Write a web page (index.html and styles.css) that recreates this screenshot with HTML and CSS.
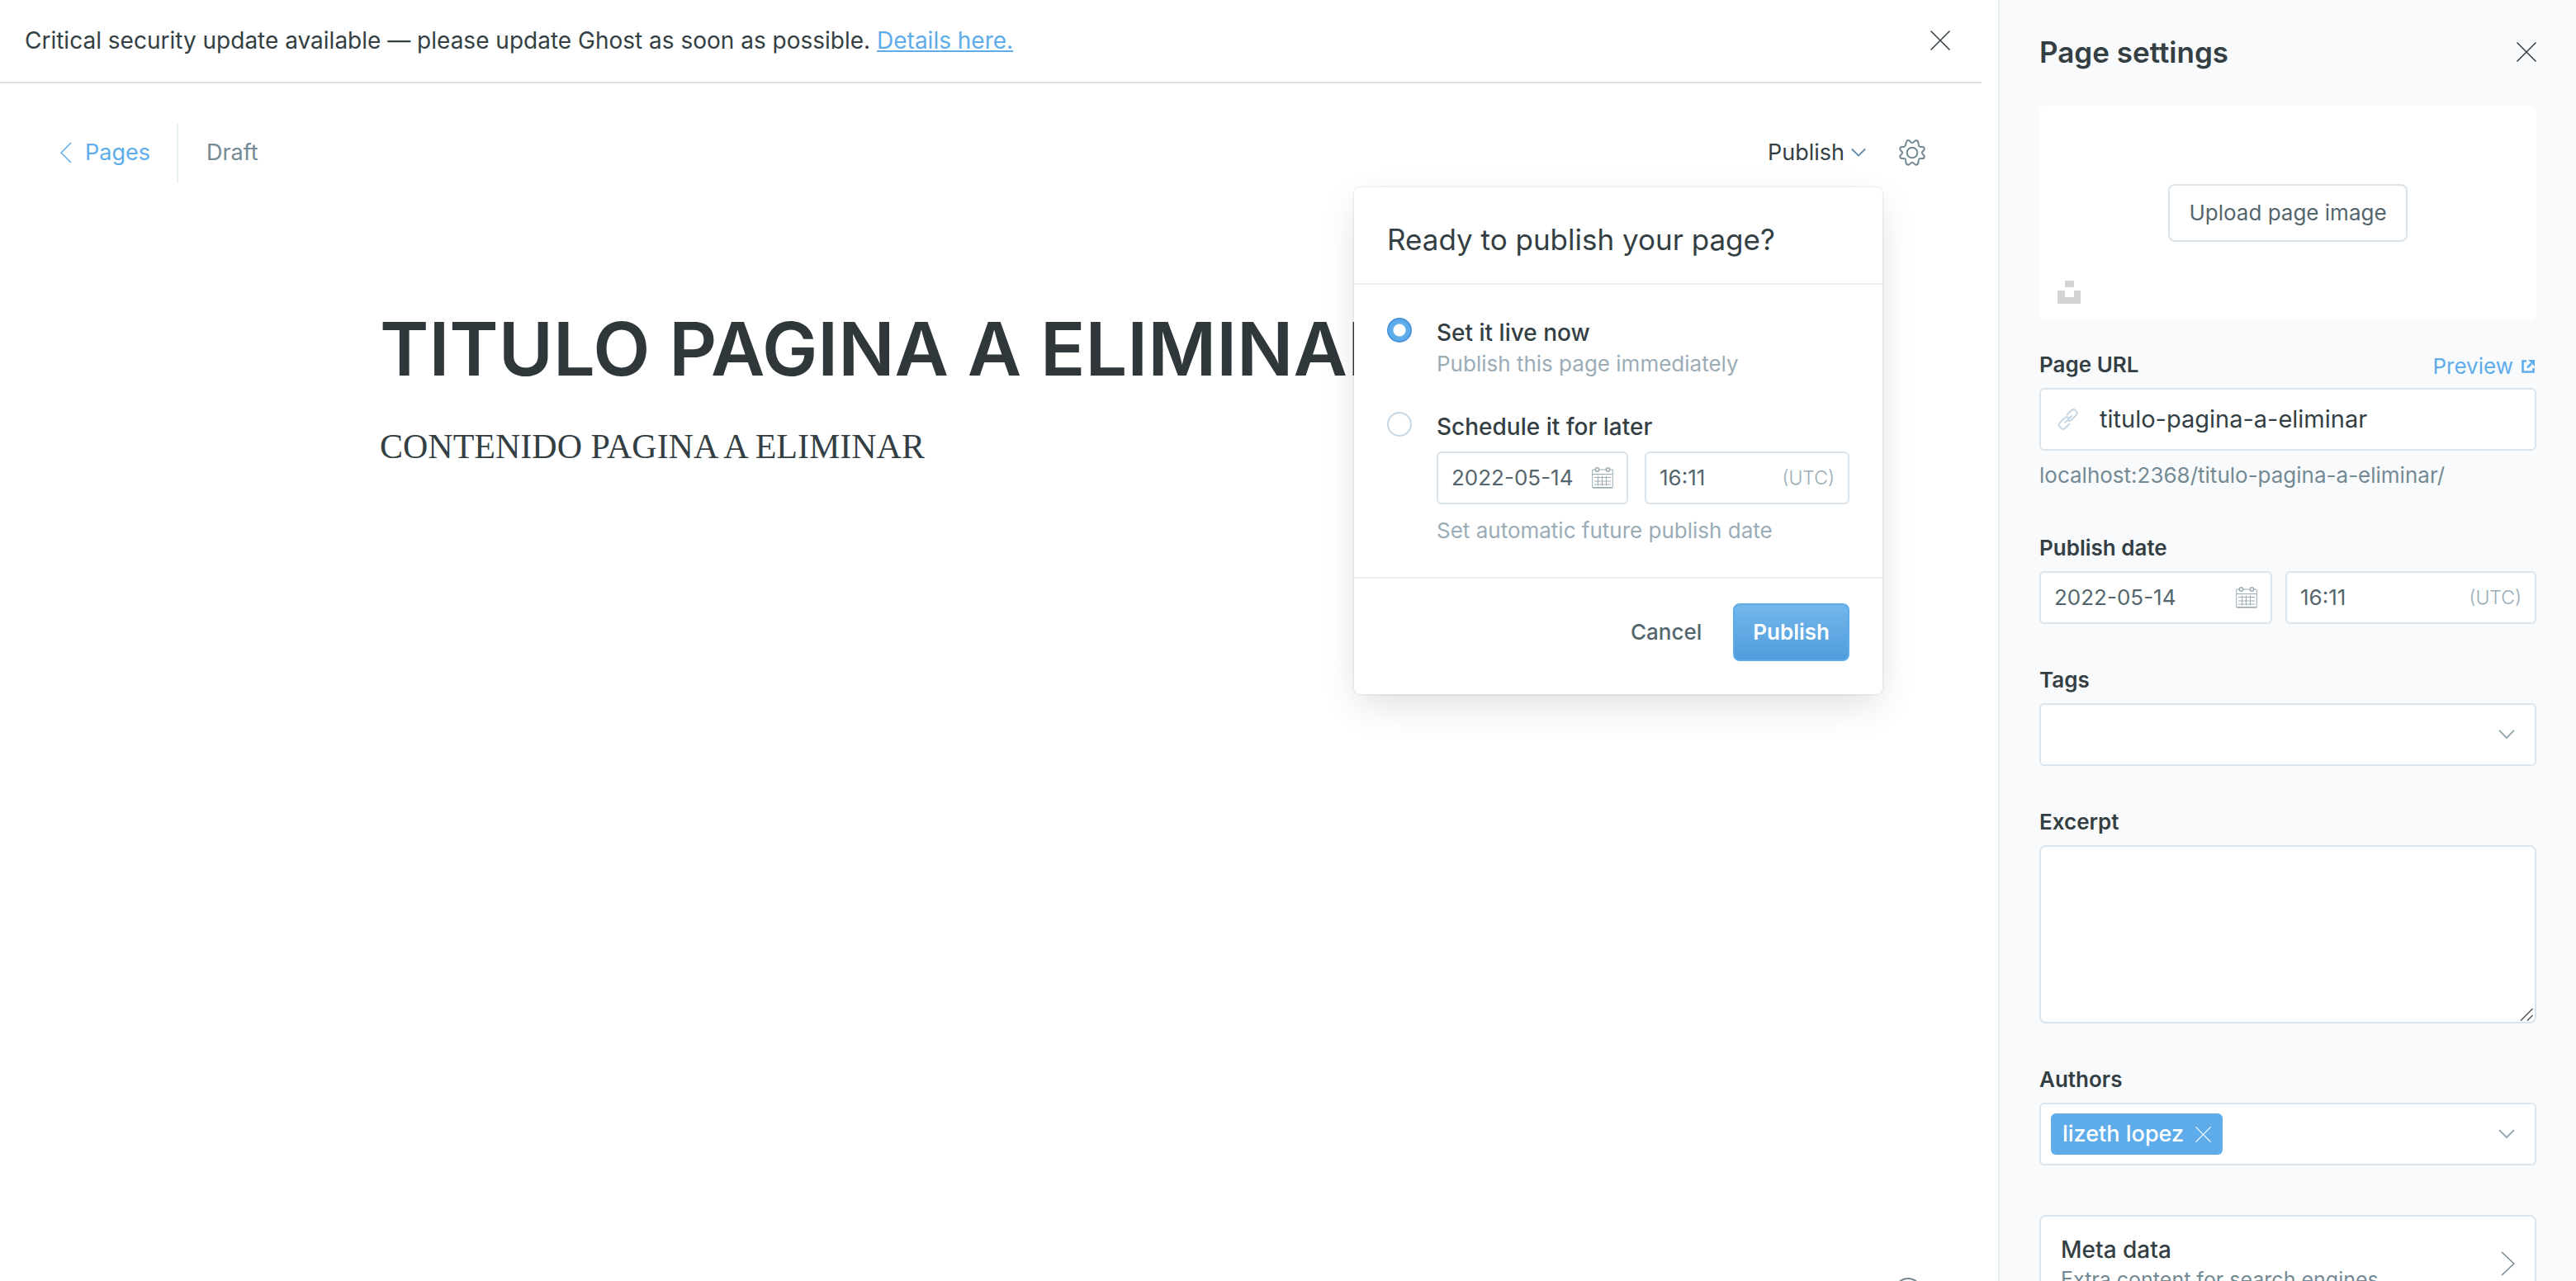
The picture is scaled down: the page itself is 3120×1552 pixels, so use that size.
FILE: index.html
```html
<!DOCTYPE html>
<html lang="en">
<head>
<meta charset="utf-8">
<title>Ghost Admin – Page editor</title>
<link rel="stylesheet" href="styles.css">
</head>
<body>
<svg class="sprite" aria-hidden="true">
  <symbol id="icon-close" viewBox="0 0 24 24"><path d="M.5.500l23 23M23.500.500l-23 23"/></symbol>
  <symbol id="icon-down" viewBox="0 0 20 12"><path d="M1 1l9 9 9-9"/></symbol>
  <symbol id="icon-calendar" viewBox="0 0 26 26"><path d="M1 3h3M9 3h8M22 3h3M.7 3v21.500h24.600V3M.7 8.500h24.600M3 12.500h20M3 17h20M3 21h20M7.500 10.500v12M12.500 10.500v12M17.500 10.500v12M1 25.200h24"/><circle cx="6.500" cy="3" r="2.200" stroke-width="1.500"/><circle cx="19.500" cy="3" r="2.200" stroke-width="1.500"/></symbol>
</svg>
<div class="app">
  <main class="editor">
    <div class="alert" role="alert">
      <p class="alert-text">Critical security update available — please update Ghost as soon as possible. <a href="#details">Details here.</a></p>
      <button class="icon-button" type="button" aria-label="Dismiss"><svg class="icon icon-close"><use href="#icon-close"/></svg></button>
    </div>
    <header class="toolbar">
      <a class="back-link" href="#pages"><svg class="icon back-arrow" viewBox="0 0 14 26"><path d="M13 1L1 13l12 12"/></svg>Pages</a>
      <span class="status">Draft</span>
      <div class="toolbar-actions">
        <div class="publish-menu">
          <button class="publish-trigger" type="button" aria-expanded="true">Publish<svg class="icon icon-down"><use href="#icon-down"/></svg></button>
          <form class="popover">
            <h2 class="popover-title">Ready to publish your page?</h2>
            <div class="popover-body">
              <input class="radio" type="radio" name="when" id="now" checked>
              <div class="option">
                <label class="option-label" for="now">Set it live now</label>
                <p class="option-hint">Publish this page immediately</p>
              </div>
              <input class="radio" type="radio" name="when" id="later">
              <div class="option">
                <label class="option-label" for="later">Schedule it for later</label>
                <div class="date-time popover-date">
                  <div class="field"><input type="text" aria-label="Scheduled date" value="2022-05-14"><svg class="icon calendar"><use href="#icon-calendar"/></svg></div>
                  <div class="field"><input type="text" aria-label="Scheduled time" value="16:11"><span class="zone">(UTC)</span></div>
                </div>
                <p class="option-hint">Set automatic future publish date</p>
              </div>
            </div>
            <div class="popover-footer">
              <button class="cancel" type="button">Cancel</button>
              <button class="primary" type="submit">Publish</button>
            </div>
          </form>
        </div>
        <button class="icon-button" type="button" aria-label="Settings"><svg class="icon gear" viewBox="0 0 32 32"><path d="M12.300 1.200a1.500 1.500 0 0 0-2.200.2L8.600 3.800c-.3 2.100-.4 3.500-1.300 4.400s-2.300 1-3.900.7c-1.600-.2-2.200 1.800-2.200 2.800 0 1.600 3 2.500 3 4.300s-3 2.800-3 4.400c.2 1.300.9 2.700 2.200 2.700 1.600 0 3-.6 4 .4s.9 2.600 1 4.400c.1 1.500 1.600 2.500 3.200 2.900 1.500 0 2.500-3 4.400-3s3 3 4.500 3c1.600-.4 2.900-1.300 3-2.900.1-1.800 0-3.300 1-4.400 1-1 2.500-.5 4.100-.4 1.400.1 2.100-1.400 2.200-2.700 0-1.600-3-2.600-3-4.400s3-2.700 3-4.300c0-1-.7-3-2.200-2.800-1.600.3-3.100.2-4.100-.7-1-.9-.8-2.500-1-4.300C23.400 2.200 22 1.300 20.500 1c-1.500 0-2.500 3-4.500 3s-2.600-2.300-3.700-2.800z"/><circle cx="16" cy="16" r="6.300"/></svg></button>
      </div>
    </header>
    <article class="document">
      <h1 class="title">TITULO PAGINA A ELIMINAR</h1>
      <p class="content">CONTENIDO PAGINA A ELIMINAR</p>
    </article>
    <a class="help" href="#help" aria-label="Help"></a>
  </main>

  <aside class="settings">
    <div class="settings-header">
      <h2 class="settings-title">Page settings</h2>
      <button class="icon-button" type="button" aria-label="Close settings"><svg class="icon icon-close"><use href="#icon-close"/></svg></button>
    </div>
    <div class="uploader">
      <button class="upload-button" type="button">Upload page image</button>
      <svg class="unsplash" viewBox="0 0 28 28"><path d="M9 0h11v8H9zM0 12h9v8h11v-8h8v16H0z"/></svg>
    </div>
    <div class="group">
      <div class="label-row">
        <label for="url">Page URL</label>
        <a class="preview" href="#preview">Preview<svg class="preview-icon" viewBox="0 0 16 16"><path d="M6 1.500H1.500v13h13V10M7 9.500l5-5" fill="none" stroke="currentColor" stroke-width="2.600"/><path d="M8 0h8v8z"/></svg></a>
      </div>
      <div class="field field-large">
        <svg class="icon link-icon" viewBox="0 0 26 26"><path d="M11 8l5-5c3-3 4-2.500 6-.5s2.500 3.500 0 6l-5 5c-2 2-4 1.500-5.500 0M15 18l-5 5c-3 3-4.500 2-6.500 0s-3-3.500 0-6.500l5-5c2-2 4-1.500 5.500.5M8.500 17.500l9-9"/></svg>
        <input type="text" id="url" value="titulo-pagina-a-eliminar">
      </div>
      <p class="url-hint">localhost:2368/titulo-pagina-a-eliminar/</p>
    </div>
    <div class="group">
      <label for="date">Publish date</label>
      <div class="date-time">
        <div class="field"><input type="text" id="date" value="2022-05-14"><svg class="icon calendar"><use href="#icon-calendar"/></svg></div>
        <div class="field"><input type="text" aria-label="Publish time" value="16:11"><span class="zone">(UTC)</span></div>
      </div>
    </div>
    <div class="group">
      <label for="tags">Tags</label>
      <div class="field field-large"><input type="text" id="tags"><svg class="icon icon-down select-arrow"><use href="#icon-down"/></svg></div>
    </div>
    <div class="group">
      <label for="excerpt">Excerpt</label>
      <div class="excerpt-box">
        <textarea class="excerpt" id="excerpt"></textarea>
        <svg class="icon grip" viewBox="0 0 16 16"><path d="M1 15.500L15.500 1M9 15.500l6.500-6.500"/></svg>
      </div>
    </div>
    <div class="group">
      <label for="authors">Authors</label>
      <div class="field field-large field-tokens">
        <span class="token">lizeth lopez<button type="button" aria-label="Remove lizeth lopez"><svg class="icon"><use href="#icon-close"/></svg></button></span>
        <input type="text" id="authors">
        <svg class="icon icon-down select-arrow"><use href="#icon-down"/></svg>
      </div>
    </div>
    <button class="meta" type="button">
      <span class="meta-text"><strong>Meta data</strong><span>Extra content for search engines</span></span>
      <svg class="icon meta-arrow" viewBox="0 0 17 30"><path d="M1 1l15 14L1 29"/></svg>
    </button>
  </aside>
</div>
</body>
</html>
```
FILE: styles.css
```css
:root {
  --ink: #343f44;
  --mid: #54666d;
  --soft: #738a94;
  --pale: #9bacb6;
  --line: #dae4ea;
  --rule: #e8eff3;
  --blue: #5eacea;
}

* {
  box-sizing: border-box;
}

body {
  margin: 0;
  background: #fff;
  color: var(--ink);
  font: 26px/32px Inter, "Liberation Sans", sans-serif;
}

h1, h2, p {
  margin: 0;
}

a {
  color: var(--blue);
}

button, input, textarea {
  margin: 0;
  padding: 0;
  border: 0;
  background: none;
  color: inherit;
  font: inherit;
}

.sprite {
  position: absolute;
  width: 0;
  height: 0;
}

.icon {
  flex: none;
  fill: none;
  stroke: currentColor;
  stroke-width: 2;
}

.icon-button {
  display: flex;
}

.icon-close {
  width: 24px;
  height: 24px;
  stroke-width: 1.5;
}

.icon-down {
  width: 20px;
  height: 12px;
}

.app {
  display: grid;
  grid-template-columns: minmax(0, 1fr) 700px;
  grid-template-rows: minmax(0, 1fr);
  height: 100vh;
  overflow: hidden;
}

/* Editor */

.editor {
  display: flex;
  flex-direction: column;
}

.alert {
  display: flex;
  align-items: center;
  justify-content: space-between;
  height: 101px;
  margin-right: 20px;
  padding: 0 38px 2px 30px;
  border-bottom: 2px solid #dfe1e3;
}

.alert-text {
  font-size: 28px;
}

.toolbar {
  display: flex;
  align-items: center;
  height: 72px;
  margin-top: 48px;
  padding: 0 88px 0 73px;
  font-size: 27px;
}

.back-link {
  display: flex;
  align-items: center;
  gap: 16px;
  height: 72px;
  padding-right: 32px;
  border-right: 2px solid var(--rule);
  text-decoration: none;
}

.back-arrow {
  width: 14px;
  height: 26px;
  stroke-width: 1.5;
}

.status {
  margin-left: 34px;
  color: var(--soft);
}

.toolbar-actions {
  display: flex;
  align-items: center;
  gap: 40px;
  margin-left: auto;
}

.publish-menu {
  position: relative;
}

.publish-trigger {
  display: flex;
  align-items: center;
  gap: 8px;
}

.publish-trigger .icon {
  width: 18px;
  color: #5c87a8;
}

.gear {
  width: 32px;
  height: 32px;
  color: var(--soft);
}

.document {
  padding: 152px 460px 0;
}

.title {
  color: #2f373b;
  font-size: 90px;
  line-height: 100px;
  font-weight: 600;
  white-space: nowrap;
}

.content {
  margin-top: 36px;
  font: 42px/64px "Liberation Serif", serif;
}

.help {
  flex: none;
  width: 34px;
  height: 34px;
  margin: auto 92px -30px auto;
  border: 2px solid var(--soft);
  border-radius: 50%;
}

/* Publish popover */

.popover {
  position: absolute;
  z-index: 1;
  top: 58px;
  right: -20px;
  width: 640px;
  border-radius: 8px;
  background: #fff;
  box-shadow: 0 0 0 2px rgba(0, 0, 0, 0.04), 0 16px 48px -6px rgba(0, 0, 0, 0.14);
  font-size: 26px;
}

.popover-title {
  padding: 42px 40px 32px;
  border-bottom: 2px solid var(--rule);
  font-size: 35px;
  line-height: 42px;
  font-weight: 400;
}

.popover-body {
  display: grid;
  grid-template-columns: 30px minmax(0, 1fr);
  gap: 38px 30px;
  padding: 40px 40px 36px;
  border-bottom: 2px solid var(--rule);
}

.radio {
  appearance: none;
  width: 30px;
  height: 30px;
  border: 2px solid #c5d7e5;
  border-radius: 50%;
}

.radio:checked {
  border-color: #4a96dc;
  background: radial-gradient(circle, #fff 7px, var(--blue) 8px);
}

.option-label {
  display: block;
  font-size: 28px;
  line-height: 36px;
  font-weight: 500;
}

.option-hint {
  line-height: 40px;
  color: var(--pale);
}

.popover-footer {
  display: flex;
  align-items: center;
  justify-content: flex-end;
  gap: 38px;
  padding: 30px 40px 40px;
  font-weight: 500;
}

.cancel {
  color: var(--mid);
}

.primary {
  height: 70px;
  padding: 0 22px;
  border: 2px solid var(--blue);
  border-radius: 8px;
  background: linear-gradient(#73b7ec, #509cdc);
  color: #fff;
  font-weight: 600;
}

/* Fields */

.field {
  display: flex;
  align-items: center;
  height: 64px;
  padding: 0 16px;
  border: 2px solid var(--line);
  border-radius: 6px;
  background: #fff;
  color: var(--mid);
}

.field input {
  flex: 1;
  min-width: 0;
  outline: 0;
}

.date-time {
  display: grid;
  grid-template-columns: minmax(0, 282fr) minmax(0, 304fr);
  gap: 16px;
}

.popover-date {
  grid-template-columns: minmax(0, 232fr) minmax(0, 248fr);
  gap: 20px;
  margin: 12px 0;
}

.calendar {
  width: 26px;
  height: 26px;
  color: var(--pale);
  stroke-width: 1;
  overflow: visible;
}

.zone {
  color: var(--pale);
  font-size: 23px;
  font-weight: 300;
}

.field-large {
  height: 76px;
  padding: 0 24px 0 20px;
  color: var(--ink);
  font-size: 29px;
}

.link-icon {
  width: 26px;
  height: 26px;
  margin-right: 25px;
  color: #c5d7e5;
}

.select-arrow {
  color: var(--pale);
}

/* Settings */

.settings {
  padding: 42px 48px 0;
  border-left: 2px solid var(--rule);
  background: #f9fafc;
}

.settings-header {
  display: flex;
  align-items: center;
  justify-content: space-between;
}

.settings-title {
  font-size: 35px;
  line-height: 42px;
  font-weight: 600;
}

.uploader {
  position: relative;
  display: flex;
  align-items: center;
  justify-content: center;
  height: 260px;
  margin: 44px 0 38px;
  border-radius: 8px;
  background: #fff;
}

.upload-button {
  height: 70px;
  padding: 0 23px;
  border: 2px solid var(--line);
  border-radius: 8px;
  color: var(--mid);
}

.unsplash {
  position: absolute;
  bottom: 20px;
  left: 22px;
  width: 28px;
  height: 28px;
  fill: #d4d4d4;
}

.group {
  margin-bottom: 52px;
}

.group label {
  display: block;
  margin-bottom: 12px;
  font-weight: 600;
}

.label-row {
  display: flex;
  justify-content: space-between;
}

.preview {
  display: flex;
  gap: 10px;
  padding-top: 2px;
  text-decoration: none;
}

.preview-icon {
  width: 16px;
  height: 16px;
  margin: 8px 2px 0 0;
  fill: currentColor;
}

.url-hint {
  padding: 14px 0 4px;
  color: var(--soft);
}

.excerpt-box {
  position: relative;
}

.excerpt {
  display: block;
  width: 100%;
  height: 216px;
  border: 2px solid var(--line);
  border-radius: 8px;
  background: #fff;
  resize: none;
}

/* Resize grip, laid over the text area's corner */
.grip {
  position: absolute;
  right: 4px;
  bottom: 3px;
  width: 16px;
  height: 16px;
  color: #555;
  stroke-width: 1.5;
  pointer-events: none;
}

.field-tokens {
  padding-left: 12px;
}

.token {
  display: flex;
  align-items: center;
  gap: 14px;
  height: 50px;
  padding: 0 14px;
  border-radius: 6px;
  background: var(--blue);
  color: #fff;
  font-size: 27px;
  font-weight: 500;
}

.token button {
  display: flex;
}

.token .icon {
  width: 19px;
  height: 19px;
  stroke-width: 1.5;
}

.meta {
  display: flex;
  align-items: center;
  justify-content: space-between;
  width: 100%;
  margin-top: 60px;
  padding: 22px 24px;
  border: 2px solid var(--line);
  border-radius: 8px;
  background: #fff;
  text-align: left;
}

.meta-text {
  display: grid;
  gap: 2px;
  font-size: 25px;
  line-height: 32px;
  color: var(--soft);
}

.meta strong {
  color: var(--ink);
  font-size: 28px;
  line-height: 36px;
  font-weight: 500;
}

.meta-arrow {
  width: 17px;
  height: 30px;
  color: var(--soft);
  stroke-width: 1.5;
}
```
